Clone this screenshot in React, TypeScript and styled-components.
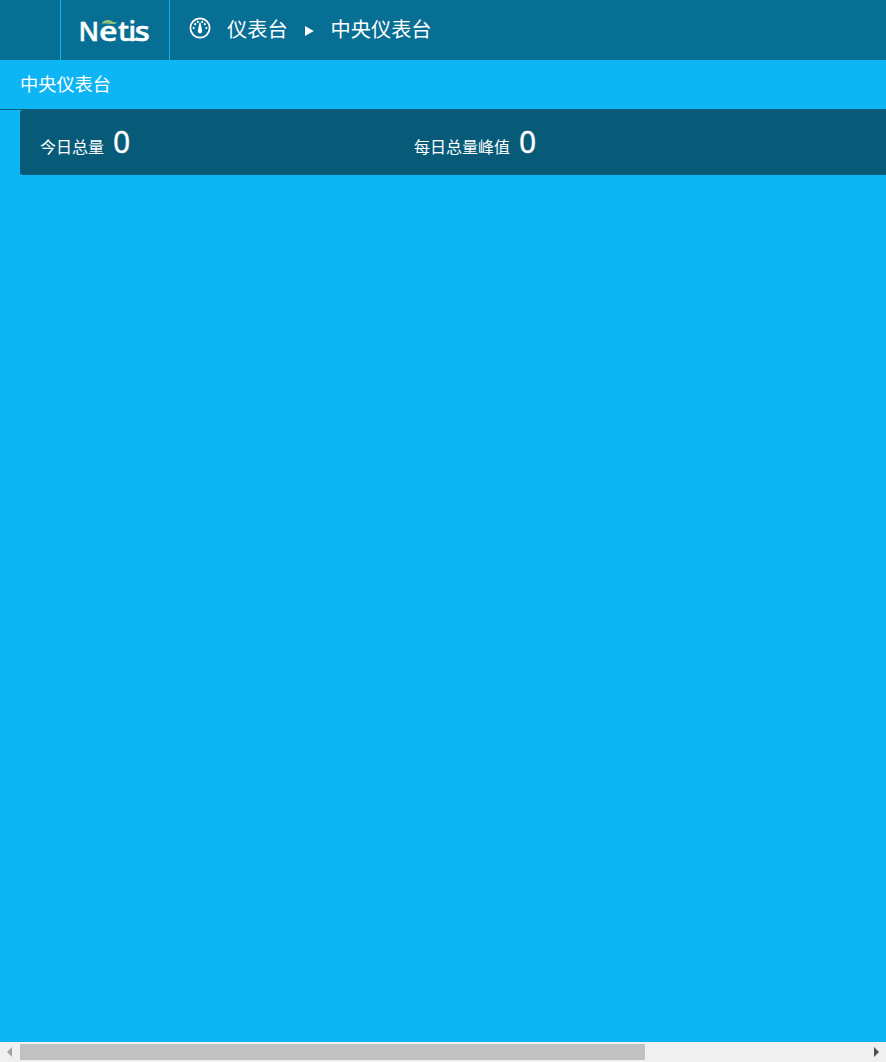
import React from 'react';
import styled, { createGlobalStyle } from 'styled-components';

const GlobalStyle = createGlobalStyle`
  * { box-sizing: border-box; }
  body {
    margin: 0;
    background: #0eb5f5;
    color: #fff;
    font-family: "Open Sans", "Noto Sans CJK SC", sans-serif;
    overflow: hidden;
  }
`;

const Page = styled.div`
  display: flex;
  flex-direction: column;
  height: 100vh;
`;

const Header = styled.header`
  display: flex;
  flex: none;
  height: 60px;
  background: #076e94;
`;

const MenuSlot = styled.div`
  width: 60px;
`;

const Brand = styled.div`
  width: 110px;
  border-left: 1px solid #0eb5f5;
  border-right: 1px solid #0eb5f5;
  svg { display: block; }
`;

const Breadcrumb = styled.nav`
  display: flex;
  align-items: center;
  height: 60px;
  padding-left: 19px;
  font-size: 20.2px;
  font-family: "Noto Sans CJK SC", sans-serif;
  white-space: nowrap;
`;

const GaugeIcon = styled.svg`
  margin: 0 16px 4px 0;
`;

const Arrow = styled.svg`
  margin: 2px 17px 0 17px;
`;

const Crumb = styled.span`
  height: 60px;
  line-height: 57px;
`;

const TitleBar = styled.div`
  flex: none;
  height: 50px;
  padding-left: 20px;
  border-bottom: 1px solid #075b79;
  font: 400 18.2px/47px "Noto Sans CJK SC", sans-serif;
`;

const Content = styled.main`
  flex: 1;
  padding-left: 20px;
`;

const StatPanel = styled.section`
  display: flex;
  height: 65px;
  padding-left: 20px;
  background: #075b79;
  border-radius: 3px 0 0 3px;
`;

const Stat = styled.div`
  display: flex;
  align-items: baseline;
  flex: none;
  width: 374px;
  height: 65px;
`;

const StatLabel = styled.span`
  font: 400 16px/24px "Noto Sans CJK SC", sans-serif;
`;

const StatValue = styled.span`
  margin-left: 9px;
  font: 400 30px/64px "Noto Sans", sans-serif;
  -webkit-text-stroke: 0.3px #fff;
`;

const ScrollBar = styled.div`
  display: flex;
  flex: none;
  align-items: center;
  height: 20px;
  background: #f0f0f0;
`;

const ScrollButton = styled.div`
  display: flex;
  width: 20px;
  height: 20px;
  svg { display: block; }
`;

const Track = styled.div`
  flex: 1;
  height: 16px;
`;

const Thumb = styled.div`
  width: 625px;
  height: 16px;
  background: #c1c1c1;
`;

const stats = [
  { label: '今日总量', value: 0 },
  { label: '每日总量峰值', value: 0 },
];

export default function App() {
  return (
    <Page>
      <GlobalStyle />
      <Header>
        <MenuSlot />
        <Brand>
          <svg width="108" height="60" viewBox="61 0 108 60">
            <text y="40.5" fill="#fff" stroke="#fff" strokeWidth="0.4" fontFamily="Open Sans, sans-serif" fontSize="27" fontWeight="600">
              <tspan x="78.6" textLength="20.6" lengthAdjust="spacingAndGlyphs">N</tspan>
              <tspan x="99" textLength="18.5" lengthAdjust="spacingAndGlyphs">e</tspan>
              <tspan x="118" textLength="11" lengthAdjust="spacingAndGlyphs">t</tspan>
              <tspan x="128.6">i</tspan>
              <tspan x="134.8" textLength="15" lengthAdjust="spacingAndGlyphs">s</tspan>
            </text>
            <path d="M125 39.5H145" stroke="#fff" strokeWidth="2.5" />
            <path d="M101.5 23.8C103.5 19.6 109 18.7 113 22L117.5 22.6C113 25.8 109.5 22.6 101.5 23.8Z" fill="#8fc07c" />
          </svg>
        </Brand>
        <Breadcrumb>
          <GaugeIcon width="22" height="22" viewBox="0 0 22 22" fill="none">
            <circle cx="11" cy="11" r="9.6" stroke="#fff" strokeWidth="1.8" />
            <path d="M10.5 5.5h1l1.6 8a2.2 2.2 0 1 1-4.2 0z" fill="#fff" />
            <g fill="#fff">
              <circle cx="4.7" cy="11" r="1.1" />
              <circle cx="6.2" cy="7.2" r="1.1" />
              <circle cx="8.7" cy="4.9" r="1.1" />
              <circle cx="13.3" cy="4.9" r="1.1" />
              <circle cx="15.8" cy="7.2" r="1.1" />
              <circle cx="17.3" cy="11" r="1.1" />
            </g>
          </GaugeIcon>
          <Crumb>仪表台</Crumb>
          <Arrow width="9" height="10" viewBox="0 0 9 10"><path d="M0 0 8.8 5 0 10Z" fill="#fff" /></Arrow>
          <Crumb>中央仪表台</Crumb>
        </Breadcrumb>
      </Header>
      <TitleBar>中央仪表台</TitleBar>
      <Content>
        <StatPanel>
          {stats.map((s) => (
            <Stat key={s.label}>
              <StatLabel>{s.label}</StatLabel>
              <StatValue>{s.value}</StatValue>
            </Stat>
          ))}
        </StatPanel>
      </Content>
      <ScrollBar>
        <ScrollButton>
          <svg width="20" height="20"><path d="M12 5V15L7 10Z" fill="#a3a3a3" /></svg>
        </ScrollButton>
        <Track><Thumb /></Track>
        <ScrollButton>
          <svg width="20" height="20"><path d="M8 5V15L13 10Z" fill="#505050" /></svg>
        </ScrollButton>
      </ScrollBar>
    </Page>
  );
}
